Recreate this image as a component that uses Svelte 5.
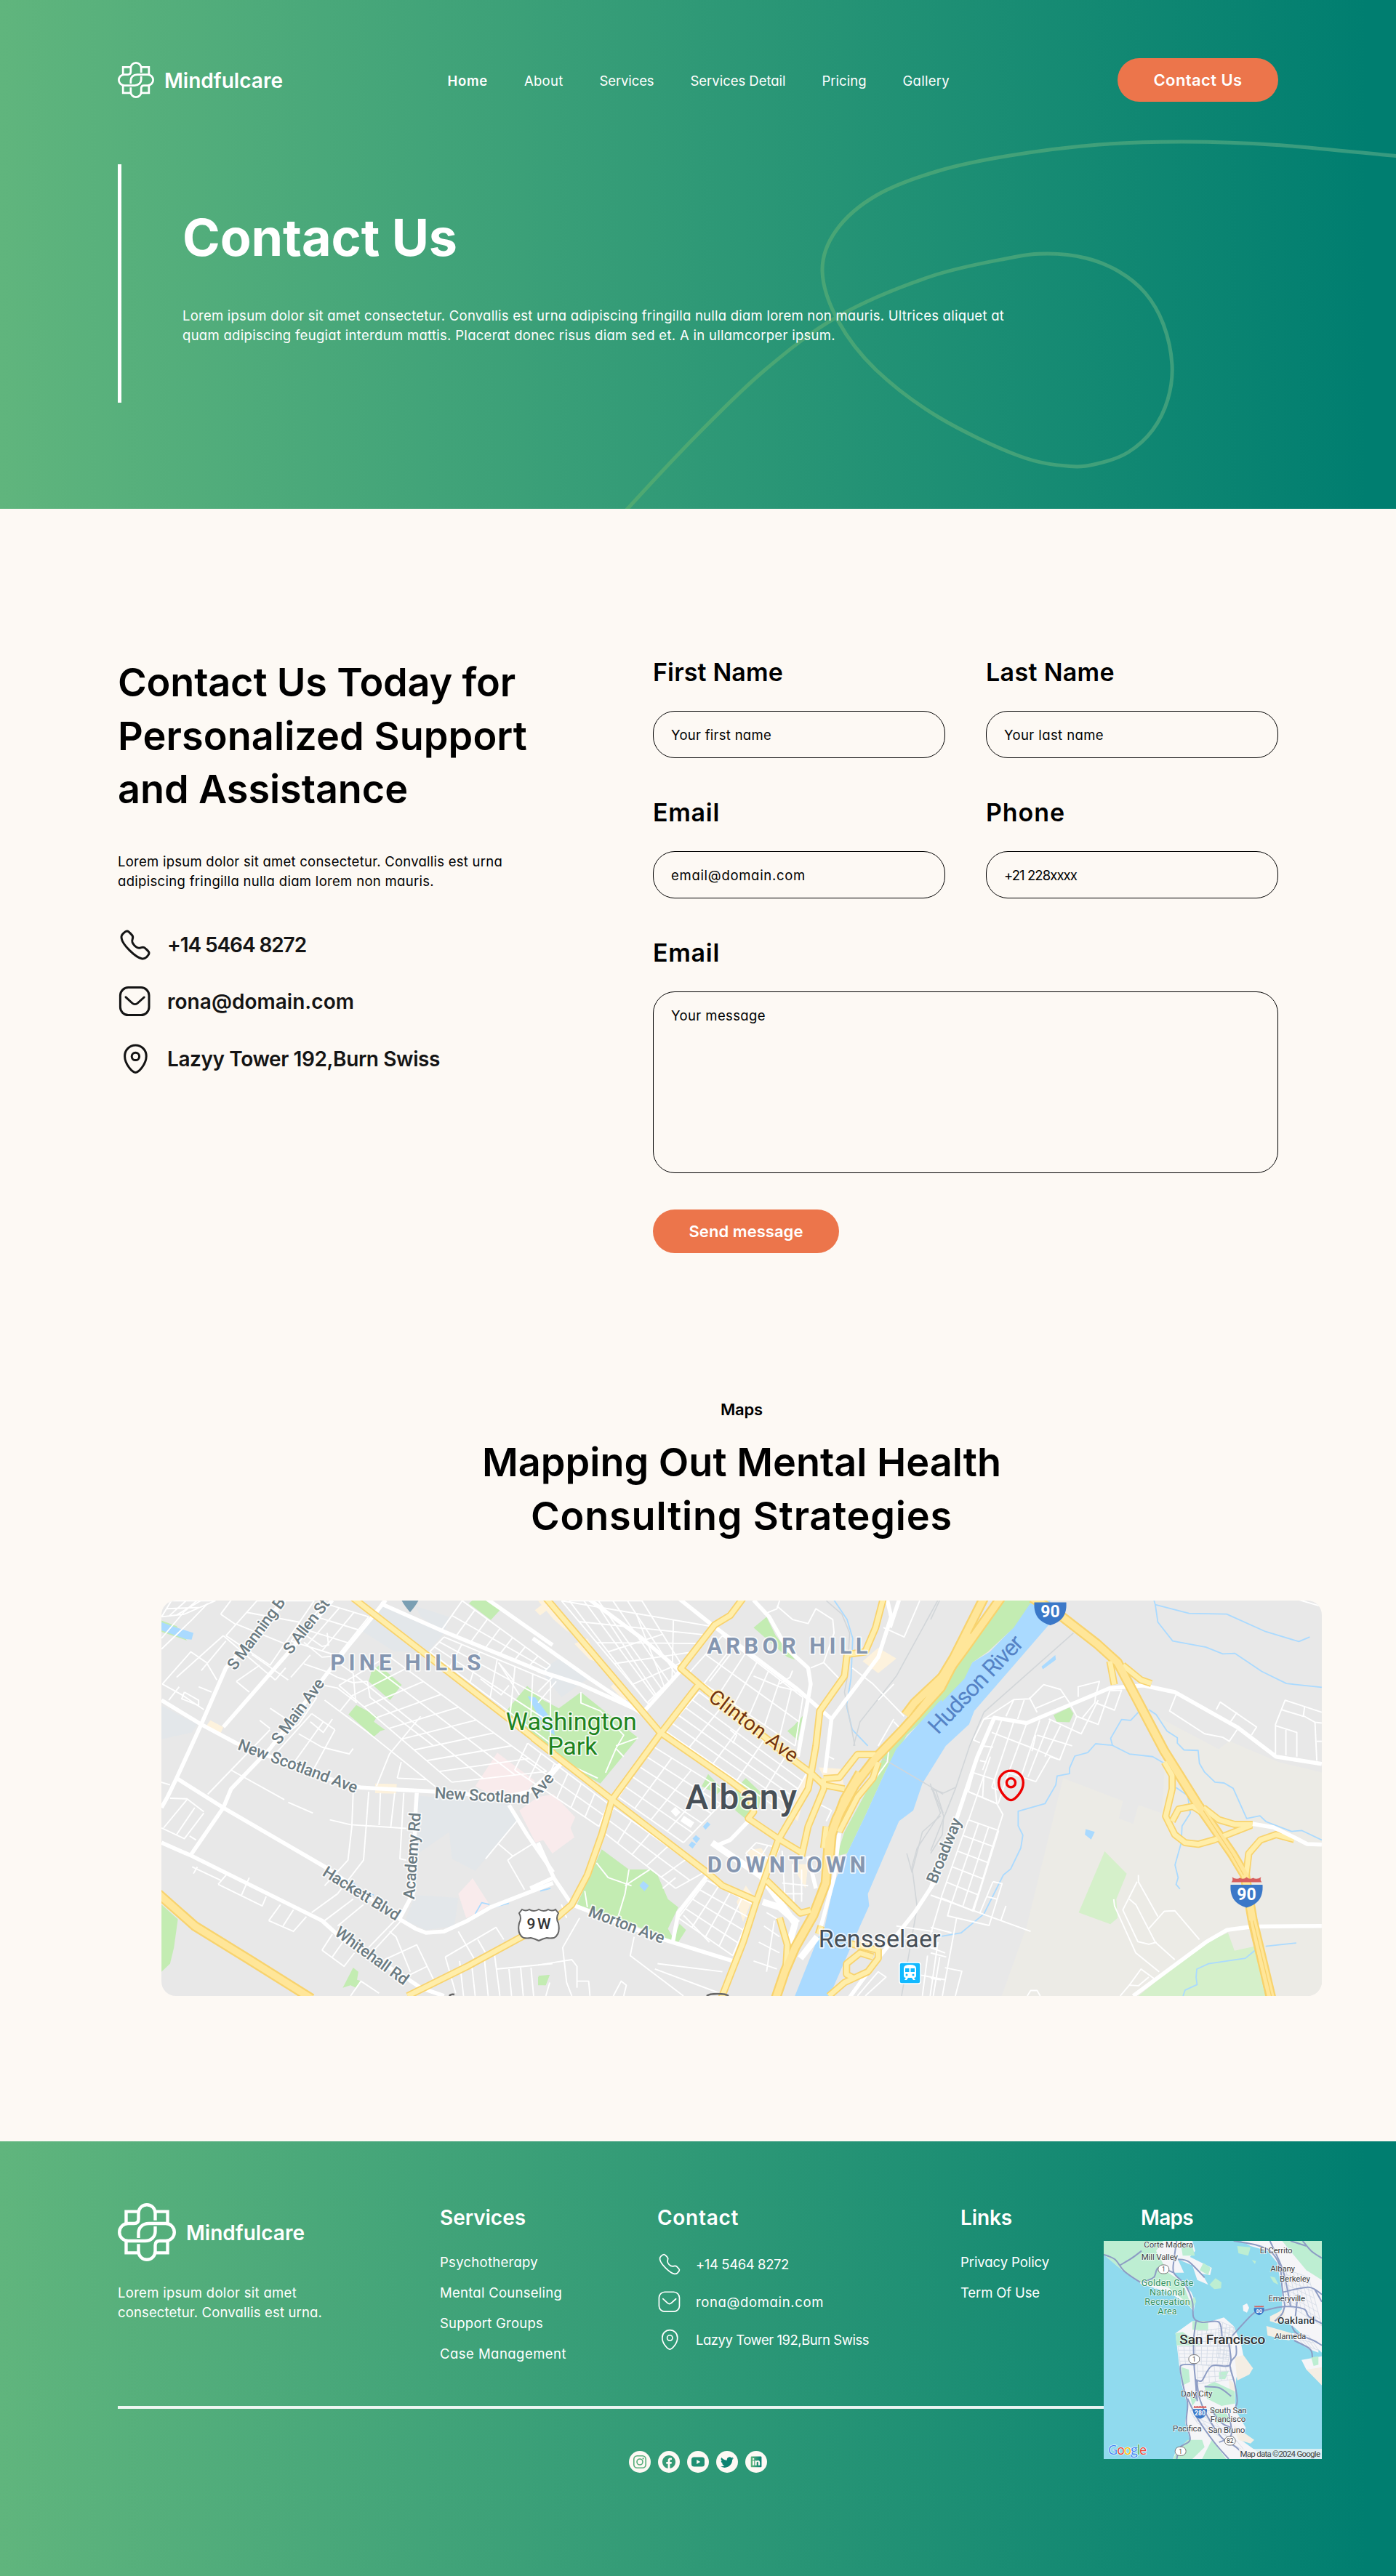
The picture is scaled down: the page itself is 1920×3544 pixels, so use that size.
<script>
  // Adjusts tracking so a run of text takes the given advance width.
  function fit(node, width) {
    const natural = node.getBoundingClientRect().width;
    node.style.letterSpacing = `${(width - natural) / node.textContent.length}px`;
  }

  // "x,y x,y ..." -> smooth Catmull-Rom path
  function smooth(str) {
    const p = str.trim().split(/\s+/).map((s) => s.split(',').map(Number));
    let d = `M${p[0]}`;
    for (let i = 0; i < p.length - 1; i++) {
      const a = p[i - 1] ?? p[i], b = p[i], c = p[i + 1], e = p[i + 2] ?? c;
      d += `C${b[0] + (c[0] - a[0]) / 6},${b[1] + (c[1] - a[1]) / 6} ${c[0] - (e[0] - b[0]) / 6},${c[1] - (e[1] - b[1]) / 6} ${c}`;
    }
    return d;
  }

  // Street grid filling a quad: n lines along the first side, m across it
  function grid([a, b, c, d, n, m]) {
    const mix = (p, q, t) => [p[0] + (q[0] - p[0]) * t, p[1] + (q[1] - p[1]) * t].map((v) => +v.toFixed(1));
    let out = '';
    for (let i = 0; i <= n; i++) out += `M${mix(a, d, i / n)}L${mix(b, c, i / n)}`;
    for (let j = 0; j <= m; j++) out += `M${mix(a, b, j / m)}L${mix(d, c, j / m)}`;
    return out;
  }

  const swoosh = smooth('855,712 863,700 960,597 1052,509 1153,435 1278,381 1388,355 1441,349 1493,355 1538,373 1575,403 1600,446 1612,502 1606,550 1585,592 1552,622 1513,637 1471,641.5 1401,627 1291,574 1205,509 1153,442 1131,373 1150,317 1205,269 1291,235 1389,214 1511,199 1628,195 1756,199.5 1925,215');

  const nav = [['Home', 55.5], ['About', 53.5], ['Services', 75], ['Services Detail', 131], ['Pricing', 61], ['Gallery', 64.5]];
  const reach = [['phone', '+14 5464 8272', 191, 128], ['mail', 'rona@domain.com', 257, 176], ['pin', 'Lazyy Tower 192,Burn Swiss', 375, 238]];
  const fields = [['First Name', 179, 'Your first name', 138], ['Last Name', 177, 'Your last name', 137], ['Email', 92, 'email@domain.com', 185], ['Phone', 109, '+21 228xxxx', 100]];
  const services = [['Psychotherapy', 135], ['Mental Counseling', 168], ['Support Groups', 142], ['Case Management', 174]];
  const links = [['Privacy Policy', 122], ['Term Of Use', 109]];

  // City map, drawn on three sheets that share one scale
  const sheets = [
    {
      x: -22,
      tint: ['62,450 200,520 180,550 62,575', '900,90 910,75 1020,110 1150,180 1090,250 960,250 830,170', '1050,785 1400,815 1430,880 1270,1065 1180,1020 1170,920 1050,1000', '1040,1155 1205,1165 1190,1270 1080,1285 1000,1250', '1040,80 1170,120 1150,180 1060,120'],
      pink: ['1270,750 1355,625 1500,730 1470,770 1350,790', '1205,1150 1260,1092 1325,1190 1270,1225 1235,1240'],
      park: ['62,1190 125,1245 110,1350 95,1410 62,1440', '860,360 870,325 900,300 987,373 942,430', '782,483 812,448 892,490 880,510 922,540 905,545 880,566 855,545', '1246,70 1260,58 1320,58 1365,95 1330,132', '760,1500 800,1425 820,1440 815,1470 830,1475 810,1500 790,1490', '1514,1455 1556,1452 1540,1490 1514,1488', '62,134 120,155 160,208 62,176'],
      meadow: [],
      shops: ['235,525 250,505 300,530 285,565', '885,740 968,742 965,778 885,776', '1500,95 1540,65 1560,85 1520,115'],
      water: ['62,140 120,160 185,180 178,205 155,203 62,170'],
      stream: ['1270,1225 1295,1183 1325,1190', '1340,1200 1400,1185', '1520,1140 1560,1130', '740,1085 800,1110 830,1140 880,1155'],
      rail: [],
      minor: ['65,370 140,410 225,465', '150,400 205,430 205,450 140,425 150,400', '205,380 255,400', '90,430 130,380', '62,200 150,100 200,58', '62,240 180,130 240,70', '65,370 175,250 235,290 275,355', '120,345 300,190', '215,320 310,210', '300,190 330,215 500,355', '290,110 330,58', '290,110 350,150', '350,360 440,300', '350,360 400,400', '410,260 550,355', '500,355 540,310', '610,295 700,325 740,345 800,365 855,360', '610,215 680,270 740,265', '700,180 705,225 680,230 620,190', '560,345 635,262', '740,290 800,330 810,440', '690,375 740,385 815,440', '855,360 865,420 1110,600', '690,430 850,545 1115,750', '660,420 590,520 480,600', '590,555 680,605 785,630 800,610', '635,510 685,550 720,500', '800,410 750,470', '480,460 550,505', '440,505 480,535', '60,735 95,745', '95,795 160,797 225,845', '70,905 160,800', '120,930 190,830', '62,905 150,945 225,850', '170,935 195,950', '330,690 535,800', '550,810 645,850', '240,780 480,540', '800,775 795,900 780,1025 690,1120', '860,770 850,900 840,1025 740,1150', '905,775 900,895', '960,775 945,900', '995,775 980,1020 1005,1025', '710,875 790,893 1005,907', '890,750 940,630 1060,490', '970,720 985,660', '970,720 1080,725', '180,1050 290,1100', '185,1075 200,1050', '280,1115 450,1195 465,1160', '280,1115 320,1070', '370,1155 400,1090', '475,1250 570,1290 620,1235', '475,1250 520,1190', '530,1270 570,1210', '680,1360 765,1420 805,1370', '680,1360 720,1300', '720,1385 760,1330', '640,1220 740,1150', '690,1250 800,1170', '740,1270 840,1190', '860,1350 960,1250', '880,1360 985,1250', '920,1395 1045,1340 1110,1470', '1000,1460 1085,1420', '940,1290 965,1310 1020,1440', '1155,1385 1350,1275 1380,1320', '1155,1385 1195,1520', '1205,1290 1265,1390', '1280,1320 1310,1370', '1350,1430 1568,1410', '1210,1400 1225,1530', '1255,1400 1270,1530', '1305,1390 1320,1530', '1345,1380 1365,1530', '1400,1430 1410,1530', '1445,1425 1455,1530', '1485,1425 1495,1530', '1360,965 1415,1010 1490,965', '1310,1020 1430,880', '1395,1025 1460,1135', '1395,1025 1415,1010', '790,1530 830,1475 900,1520', '1360,290 1420,360', '1440,410 1360,290', '1290,350 1370,410 1400,375'],
      grids: [[[935, 265], [1545, 695], [1180, 735], [745, 375], 3, 9], [[1150, 195], [1560, 360], [1560, 590], [1095, 250], 3, 6], [[360, 600], [830, 765], [650, 1025], [250, 780], 0, 8], [[350, 870], [770, 1100], [620, 1235], [200, 1010], 0, 7], [[430, 60], [650, 60], [480, 300], [310, 190], 3, 2], [[690, 70], [860, 120], [740, 265], [560, 210], 3, 3], [[1220, 60], [1560, 300], [1530, 330], [1140, 170], 2, 7], [[640, 480], [730, 540], [640, 700], [500, 630], 1, 2], [[100, 60], [270, 60], [150, 110], [62, 120], 2, 3]],
      major: ['62,430 215,520 350,590 480,640 700,720 830,755 1110,770 1380,790 1480,770 1602,665', '62,960 180,1010 680,1250 760,1320 1000,1460 1060,1500 1150,1530', '120,720 300,830 700,1055 980,1245 1040,1280 1080,1295 1150,1290 1240,1250 1330,1200 1570,1110', '62,830 85,790 120,720 215,520 310,310 430,180 530,58', '300,530 540,265 720,58', '175,1005 300,830 330,760 480,610 700,330 780,230 870,125 925,58', '905,70 1150,175 1568,340', '1310,50 1568,225', '1400,820 1470,930 1570,1070', '1045,775 1040,850 1030,1150 980,1240'],
      wide: [],
      yellow: ['800,50 880,110 1572,628', '1010,1530 1240,1420 1440,1315 1500,1285'],
      highway: ['50,1150 190,1270 400,1395 640,1540'],
    },
    {
      x: 518,
      tint: ['10,320 90,270 190,350 90,420'],
      pink: ['-72,840 0,790 60,780 143,865 125,905 140,940 55,1000 20,950 -10,960'],
      park: ['-122,470 -42,377 20,430 80,460 165,400 385,570 240,740 90,660 -10,575', '245,985 350,1060 430,1060 460,1080 500,1170 540,1200 500,1280 530,1330 300,1240 150,1190 220,1040', '545,1262 570,1285 540,1330 520,1322', '830,160 880,120 915,190 990,280 960,270', '630,750 655,705 710,760 690,780', '760,760 800,720 860,775 850,830 800,872 760,840', '985,525 1020,488 1000,580 960,545', '1570,330 1350,600 1270,760 1180,920 1150,1010 1190,1000 1260,860 1340,690 1420,560 1568,430', '0,1460 45,1452 30,1490 0,1490'],
      meadow: [],
      shops: ['1250,285 1310,235 1380,275 1310,330', '1080,680 1165,685 1180,755 1120,750', '970,860 1020,720 1050,700 1000,880', '800,990 860,980 900,1040 860,1070', '765,1180 800,1120 830,1160 790,1255', '0,60 40,60 120,180 60,130', '190,200 240,290 200,280 140,220', '290,370 350,430 330,430 280,380', '1000,1040 1040,1040 1030,1130 1000,1080', '1200,1320 1260,1325 1310,1360 1240,1370'],
      water: ['1902,50 1830,160 1740,250 1672,290 1630,360 1540,440 1380,610 1340,690 1260,860 1190,1000 1140,1110 1100,1290 1080,1310 985,1540 1118,1540 1240,1270 1275,1195 1270,1150 1390,880 1445,840 1480,740 1570,600 1660,520 1680,470 1985,130 1970,50', '-40,415 -10,420 50,500 65,560 30,540', '635,900 652,882 664,892 645,912', '595,945 608,932 624,945 610,962', '580,970 592,955 608,965 595,982', '390,1120 405,1102 427,1120 410,1141'],
      stream: ['1140,58 1190,130 1212,200 1205,350 1188,450 1210,540 1270,600'],
      rail: ['1110,60 1170,110 1200,180 1190,350 1180,400 1200,500 1220,600', '1280,620 1500,745 1560,780', '1540,58 1380,340 1240,510 1215,600', '1510,740 1550,850 1460,980 1440,1050 1460,1200 1400,1530', '1530,760 1560,850', '1420,1000 1440,1070 1480,920 1550,860'],
      minor: ['920,80 980,130 1040,145 1070,90 1135,130 1140,180 1100,290 1160,350', '1100,290 1050,310', '870,110 920,90 930,60', '660,360 740,260', '830,340 930,380 1020,400', '980,320 970,345 930,370', '1330,160 1410,195 1470,60', '1210,310 1290,370 1410,490', '1370,370 1310,430', '1220,380 1170,440', '1370,510 1400,540', '1310,600 1370,500', '0,440 70,360', '0,400 60,340', '165,400 165,440 240,470 330,560 300,610 330,640', '385,570 300,600', '120,670 230,720', '300,610 260,700', '225,1035 270,1090 360,1120', '350,1060 335,1150 310,1230', '180,1140 190,1200', '430,1060 335,1120', '90,1190 110,1240', '160,1240 95,1350 110,1480 130,1530', '0,1415 130,1395 150,1420 150,1500', '370,1310 355,1380 560,1530', '460,1410 710,1440', '450,1430 700,1520', '290,1530 320,1475 340,1490 330,1530', '150,1475 195,1475 200,1530', '30,1530 45,1480', '530,1090 480,1130', '560,1230 660,1330', '940,990 950,1150', '980,1040 985,1180', '1015,1060 1015,1180', '940,1110 1040,1120', '940,1150 1020,1150', '1110,880 1130,840 1090,820', '750,590 765,560 740,540', '880,1220 950,1260', '870,1270 930,1310', '850,1330 930,1370', '830,1400 920,1430', '910,1250 880,1440', '1380,1270 1520,1290', '1400,1310 1568,1370', '1230,1530 1310,1440 1340,1460 1260,1530', '1500,1380 1480,1530', '1540,1330 1510,1530', '1460,1450 1568,1470', '1120,640 1140,650', '1350,620 1345,660 1300,720'],
      grids: [[[90, 60], [665, 155], [545, 315], [430, 450], 5, 4], [[120, 60], [400, 60], [560, 310], [420, 440], 2, 5], [[710, 190], [1020, 420], [990, 600], [580, 330], 2, 7], [[620, 400], [1035, 700], [950, 850], [490, 545], 5, 5], [[440, 600], [740, 780], [560, 960], [310, 790], 5, 4], [[-40, 590], [270, 815], [235, 900], [-90, 690], 2, 6], [[290, 830], [640, 1070], [530, 1130], [250, 920], 2, 5], [[650, 1100], [830, 1190], [750, 1380], [540, 1240], 4, 4], [[840, 960], [930, 980], [880, 1080], [800, 1000], 2, 2], [[390, 1250], [740, 1400], [720, 1450], [370, 1330], 0, 4]],
      major: ['190,50 400,200 545,320', '540,50 670,150 1000,390 1130,500', '545,325 400,480', '830,58 890,120 960,240 1040,310 1050,370 1030,480 1000,640', '1345,58 1360,120 1310,270 1130,500 1105,700', '1390,58 1355,160', '0,320 160,370 390,470', '-20,200 200,350 400,480', '0,960 60,1090 130,1190', '-30,1130 60,1090', '130,1190 450,1310 750,1400', '650,1085 540,1220 520,1325', '90,665 40,720', '810,880 740,950 690,970', '1160,925 1140,1090 1090,1270', '1545,1080 1450,1220 1310,1390 1200,1535', '1040,1010 1070,1130'],
      wide: ['670,960 860,1085 990,1260 960,1360', '865,1180 930,1200 1000,1260', '1010,1390 1075,1310', '520,835 540,855', '555,870 595,895'],
      yellow: ['30,50 470,550 740,730 815,785 830,845 810,870 925,945 1020,1000', '-20,570 285,800 650,1070 710,1120 840,1175', '790,50 740,115 680,150 550,312 650,395 980,650 1050,700 1100,745 1180,760', '620,370 475,550 285,800 245,930 190,1080 130,1190 70,1240', '1330,50 1300,160 1260,250 1190,260 1180,340 1085,470 1070,600 1050,710 1040,760 925,950 870,1100 840,1180 790,1330 705,1540', '1100,720 1100,760 1040,900 1015,1010', '1100,722 1160,718 1230,632 1300,632', '880,1100 1010,1222 1050,1212', '1310,660 1290,720 1230,790 1160,920', '930,1240 960,1340 955,1420', '1090,1270 1080,1300', '1120,1530 1180,1480 1270,1440 1310,1390 1310,1360 1200,1335', '1290,1385 1240,1370 1188,1410 1188,1450 1220,1465', '1110,900 1100,980'],
      highway: ['1660,180 1550,385 1400,545 1300,645 1220,745 1150,870 1120,950 1108,1110 1060,1230 990,1350 950,1440 915,1540', '1560,340 1450,440 1415,485', '1240,700 1180,800 1130,930 1120,1050'],
    },
    {
      x: 1058,
      tint: [],
      pink: [],
      park: ['270,58 392,58 320,160 220,250 160,290 130,350 45,435 30,400 130,250', '473,485 535,457 550,480 535,512 485,510'],
      meadow: ['670,992 755,1075 715,1170 720,1240 692,1263 570,1220', '1145,1295 1170,1362 1250,1345 1292,1530 800,1530 1040,1340'],
      shops: [],
      water: ['427,305 480,262 482,280 432,315', '597,910 632,920 618,948 594,930'],
      stream: ['860,58 865,75 995,107 1140,110 1290,175 1418,212 1460,195', '865,75 875,140 932,210 1060,233 1125,258 1172,256 1275,323 1370,368 1506,382', '800,475 770,505 735,502 693,572 700,598 635,592 605,625 555,638 535,682 535,703 487,712 482,745 440,815 337,843 337,897 355,932 347,980 308,1058 280,1080 205,1225 118,1295 30,1310', '700,598 765,630 855,640 900,665', '840,465 868,483 910,545 950,570 950,590 975,615 1030,617 1035,665 1055,698 1095,735 1130,738 1165,758 1217,870 1268,860 1292,882 1390,918 1430,915 1506,950', '945,755 990,785 1000,850 968,898 965,960 941,1043 953,1090 945,1115 960,1132', '1408,1333 1290,1345', '1250,1360 1212,1390 1070,1410 1025,1430 1022,1460 1026,1488 980,1508 972,1530'],
      rail: ['550,180 205,475 150,600 95,760 0,990', '0,760 50,775 95,755', '10,765 50,860 45,930 0,1000', '35,58 0,130'],
      minor: ['245,495 205,500 165,578 190,588', '205,500 320,428 380,425 435,372 500,390 535,440 562,490 540,545 497,652 460,640 405,733 300,700', '380,420 410,475', '405,460 515,415', '320,428 290,490', '360,430 335,500', '568,418 568,380 650,360 635,415', '690,395 735,393 708,467 635,440', '635,415 632,440 585,495', '562,490 645,520 690,395', '455,500 580,555 645,430', '235,550 410,615 490,650', '275,500 200,690', '320,510 235,755', '370,515 300,700', '420,505 350,710', '460,505 375,715', '500,525 440,640', '410,560 545,600', '200,600 240,605', '190,655 215,660', '235,755 260,765', '405,560 390,620', '945,410 920,470 1055,555 1125,568 1150,583 1180,540', '1100,465 1115,437 1255,530 1235,560', '1180,475 1155,510', '1506,475 1365,430 1328,520 1328,630', '1350,465 1435,490 1440,455', '1435,488 1480,512 1506,515', '1328,525 1410,550 1410,640', '1368,540 1368,635', '1480,512 1487,655', '1487,583 1506,583', '145,770 255,815 278,855 240,970 190,1130 160,1215', '0,1155 385,1290', '290,1195 270,1250', '240,1105 275,1112 225,1268 65,1232 80,1180', '240,1105 190,1220', '215,1160 255,1170', '0,1275 80,1295', '100,1240 45,1530', '40,1170 0,1300', '0,1370 60,1385', '55,1425 120,1438 95,1530', '35,1385 10,1530', '0,1465 40,1470', '300,700 260,815', '230,640 145,880', '800,1080 800,1105 875,1235', '795,1105 740,1210 798,1328 840,1338 870,1330', '765,1170 790,1190 865,1330 940,1395', '840,1280 900,1215 940,1213 1035,1320', '705,1170 708,1195 790,1370 880,1440', '730,1530 765,1490 800,1492 840,1460', '765,1490 810,1430 860,1465', '372,1530 385,1510 410,1510 422,1530', '1415,56 1500,80'],
      grids: [[[145, 875], [262, 915], [165, 1215], [40, 1165], 5, 3], [[165, 700], [245, 725], [255, 815], [145, 770], 1, 2]],
      major: ['100,870 180,640 245,495 370,515 690,385 820,375 940,400 1180,530 1330,640 1506,667', '100,870 40,1020 0,1130', '780,1530 1060,1330 1140,1285 1240,1272 1506,1270'],
      wide: [],
      yellow: ['690,285 707,372', '740,300 810,355 850,368', '900,660 930,710 930,760 905,862 940,930 980,960 1030,966 1090,950 1235,895', '930,880 955,835 1010,825 1050,850', '1050,830 1110,875 1170,892 1240,892', '1400,948 1330,930 1270,950 1225,1000 1215,1080'],
      highway: ['270,50 130,240 0,410', '205,50 90,270 -10,430 -60,490', '390,50 480,100 640,220 720,290 900,620 1030,820 1160,1000 1210,1080 1240,1250 1312,1540'],
    },
  ];
  const ramp = ['1240,890 1320,903 1400,940 1450,965 1506,967'];
  const seams = ['1050,840 1160,1003 1205,1080', '1228,1250 1290,1530', '1242,1250 1312,1530'];

  const S = 2.8, T = 2.7034;
  const place = (sheet, x, y) => [sheets[sheet].x + x / S, -22 + y / T];
  const labels = [
    [0, 'S Manning B', 345, 322, 542, 66, 22, 'st'], [0, 'S Allen St', 560, 262, 712, 72, 22, 'st'], [0, 'S Main Ave', 515, 598, 692, 368, 22, 'st'],
    [0, 'New Scotland Ave', 352, 612, 808, 776, 22, 'st'], [0, 'New Scotland', 1113, 795, 1478, 815, 22, 'st'], [0, 'Ave', 1508, 798, 1576, 722, 22, 'st'],
    [0, 'Academy Rd', 1035, 1172, 1060, 850, 22, 'st'], [0, 'Hackett Blvd', 678, 1080, 965, 1252, 22, 'st'], [0, 'Whitehall Rd', 725, 1302, 995, 1492, 22, 'st'],
    [0, 'PINE HILLS', 712, 318, 1292, 318, 31, 'hood'], [1, 'Washington', -124, 541, 380, 541, 34, 'green'], [1, 'Park', 37, 633, 228, 633, 34, 'green'],
    [1, 'Clinton Ave', 652, 428, 978, 665, 28, 'brown'], [1, 'ARBOR HILL', 650, 258, 1270, 258, 31, 'hood'], [1, 'DOWNTOWN', 652, 1070, 1262, 1070, 31, 'hood'],
    [1, 'Albany', 567, 836, 997, 836, 48, 'city'], [1, 'Morton Ave', 190, 1232, 478, 1336, 22, 'st'], [1, 'Rensselaer', 1080, 1348, 1550, 1348, 34, 'town'],
    [2, 'Broadway', 22, 1115, 120, 878, 22, 'st'], [2, 'Hudson River', 28, 560, 362, 222, 32, 'river'],
  ].map(([s, text, x1, y1, x2, y2, size, kind]) => {
    const [ax, ay] = place(s, x1, y1), [bx, by] = place(s, x2, y2);
    return { text, x: ax, y: ay, size, kind, len: Math.hypot(bx - ax, by - ay), rot: (Math.atan2(by - ay, bx - ax) * 180) / Math.PI };
  });

  // Bay map
  const bay = {
    land: ['114,309 480,309 492,350 470,375 560,420 553,450 520,445 545,490 500,470 480,410 420,385 445,440 400,440 475,520 492,560 485,600 460,570 380,520 270,488 225,450 190,430 114,365', '410,690 480,640 560,640 610,625 650,660 680,730 690,780 660,880 655,970 660,1010 700,1080 680,1130 790,1209 400,1209 410,1180 470,1130 450,1060 460,990 435,900 425,820', '680,309 1014,309 1014,770 960,720 900,665 860,640 800,640 850,590 850,520 830,400 790,350 720,330', '890,690 920,690 1000,740 1000,770 960,755 900,720', '930,800 1014,785 1014,840 950,840', '688,575 705,567 714,585 705,605 690,598'],
    green: ['114,309 360,309 330,350 380,440 440,480 480,590 440,550 380,500 270,480 225,450 190,430 114,365', '430,309 480,330 490,370 440,370', '550,490 575,463 600,480 598,505 570,508', '480,640 545,640 545,680 480,675', '410,690 440,685 520,740 415,740', '530,910 570,890 655,930 655,980 600,990 540,960', '435,830 465,840 470,890 440,905', '400,1209 420,1170 460,1130 520,1130 530,1160 480,1209', '560,1130 620,1209 520,1209', '850,309 1014,309 1014,470 950,430 900,370', '970,790 1000,785 1000,820 980,825', '665,330 720,335 710,370 670,360', '525,400 555,420 545,450 510,430', '465,560 490,540 495,560 480,590', '590,850 630,845 615,880 590,880', '725,388 742,392 738,404', '800,455 820,460 835,490 815,480', '470,950 500,960 480,990', '560,1000 620,1020 640,1060 580,1060'],
    sand: ['655,790 690,780 730,835 715,860 665,885', '785,660 890,690 880,720 790,700', '800,620 860,590 860,630 830,650 800,640', '630,880 655,900 655,980 635,930', '650,1070 735,1130 720,1145 670,1130', '950,840 1014,830 1014,905'],
    streets: [[[420, 745], [640, 745], [625, 820], [430, 820], 5, 9], [[500, 680], [655, 665], [640, 740], [500, 740], 4, 8], [[590, 640], [650, 665], [630, 800], [580, 790], 8, 4], [[850, 420], [960, 460], [1014, 660], [870, 570], 7, 7], [[500, 820], [640, 830], [650, 880], [500, 900], 3, 6], [[900, 690], [960, 700], [1000, 760], [940, 740], 2, 4], [[470, 1010], [560, 1010], [700, 1180], [500, 1060], 4, 4]],
    roads: ['114,365 160,385 200,435 265,480', '415,309 405,380 403,440 450,490 480,560 485,625 520,645 590,645 603,720', '270,480 320,460 340,420 403,440', '420,385 465,395 530,460', '495,640 485,720 487,820 492,880 500,970', '645,700 730,610 770,598 860,580 940,590 960,620 1014,650', '650,309 740,325 800,350 840,410 850,500 862,580', '800,309 850,420 870,500 885,580', '885,309 950,330', '935,309 970,350 1014,380', '855,520 960,500 1014,530', '1014,560 985,510', '860,580 850,610 820,640', '915,530 905,620', '630,730 635,820 560,825 520,885 500,890 495,960', '660,740 660,780 635,820 655,900 665,970 655,1000', '492,820 440,820 430,840 445,920 460,980 455,1060 470,1130 430,1160 415,1209', '497,880 510,960 540,1030 600,1120 660,1160 710,1209', '460,960 500,1040 570,1140 630,1209', '890,660 910,690 980,720 1014,740', '900,720 965,755 975,790', '630,1020 640,1110 590,1140', '640,1080 600,1060 560,1010', '180,410 230,380 270,350', '530,910 590,915 640,950'],
  };
  const bayLabels = [
    ['Corte Madera', 280, 483, 337, 11.5], ['Mill Valley', 269, 420, 386, 11.5], ['El Cerrito', 758, 893, 360, 11.5], ['Albany', 802, 903, 436, 11.5],
    ['Berkeley', 840, 966, 476, 11.5], ['Emeryville', 793, 945, 558, 11.5], ['Oakland', 831, 984, 650, 13.5, 'm'], ['Alameda', 818, 949, 714, 11.5],
    ['San Francisco', 427, 781, 734, 19, 'm'], ['Daly City', 433, 562, 951, 11.5], ['South San', 552, 704, 1021, 11.5], ['Francisco', 554, 700, 1055, 11.5],
    ['Pacifica', 399, 518, 1095, 11.5], ['San Bruno', 545, 697, 1100, 11.5],
    ['Golden Gate', 269, 484, 494, 12.5, 'g'], ['National', 303, 449, 533, 12.5, 'g'], ['Recreation', 283, 470, 573, 12.5, 'g'], ['Area', 337, 416, 612, 12.5, 'g'],
  ];
  const bx = (x) => (x - 114) / 3;
  const by = (y) => (y - 309) / 3;
  const google = [['G', 0, '#4285f4'], ['o', 12.2, '#ea4335'], ['o', 21.6, '#fbbc05'], ['g', 31, '#4285f4'], ['l', 39.8, '#34a853'], ['e', 43, '#ea4335']];
</script>

{#snippet logo()}
  <svg class="mark" viewBox="0 0 80 80" fill="none" stroke="#fff" stroke-width="4.4">
    {#each [0, 180] as turn}
      <g transform="rotate({turn} 40 40)">
        <path d="M51.5 23.8V13.7a11.5 11.5 0 0 0-23 0V22q0 6-6 6H14.200a12 12 0 0 0 0 24H37.500C46 52 51.500 46 51.500 39V32" />
        <path d="M28.500 11.600H11.500V28M51.500 11.600H68.500V28" />
      </g>
    {/each}
  </svg>
{/snippet}

{#snippet glyph(name)}
  <svg class="glyph" viewBox="0 0 24 24" fill="none" stroke="currentColor" stroke-width="1.5" stroke-linecap="round" stroke-linejoin="round">
    {#if name === 'phone'}
      <path d="M11.532 12.472c3.989 3.988 4.894-.625 7.434 1.913 2.448 2.448 3.855 2.938.753 6.040-.388.312-2.857 4.070-11.534-4.605C-.493 7.144 3.262 4.672 3.574 4.284 6.684 1.174 7.166 2.589 9.614 5.037c2.540 2.540-2.071 3.447 1.918 7.435Z" />
    {:else if name === 'mail'}
      <rect x="1.700" y="2.300" width="19.800" height="19" rx="5.500" />
      <path d="m5.500 8.900 4.400 4.100c1.100 1 2.700 1 3.800 0l4.400-4" />
    {:else}
      <path d="M12.200 2.500c-4.200 0-7.400 3.300-7.400 7.500 0 5.500 5.200 11.200 7.400 11.200s7.400-5.700 7.400-11.200c0-4.200-3.200-7.500-7.400-7.500z" />
      <circle cx="12.200" cy="10.200" r="2.600" />
    {/if}
  </svg>
{/snippet}

{#snippet interstate(x, y, w, num)}
  <g transform="translate({x} {y}) scale({w / 44})">
    <path d="M1 7Q4 4 2 0q6 4 11 1 5 3 9-1 4 4 9 1 5 3 11-1-2 4 1 7z" fill="#d75f5f" />
    <path d="M0 10.500H44C45 28 38 37 22 42 6 37-1 28 0 10.500z" fill="#3b78c8" />
    <text x="22" y="31" class="num" font-size={num.length > 2 ? 20 : 23}>{num}</text>
  </g>
{/snippet}

<div class="page">
  <section class="hero">
    <svg class="swoosh" viewBox="0 0 1920 700" fill="none">
      <defs>
        <linearGradient id="line" x1="860" x2="1920" y1="0" y2="0" gradientUnits="userSpaceOnUse">
          <stop offset="0" stop-color="#4fa971" /><stop offset="1" stop-color="#379a80" />
        </linearGradient>
      </defs>
      <path d={swoosh} stroke="url(#line)" stroke-width="5" />
    </svg>
    <header>
      <div class="brand">{@render logo()}<strong><span use:fit={163}>Mindfulcare</span></strong></div>
      <nav>{#each nav as [name, w], i}<a href="#top" class:active={i === 0}><span use:fit={w}>{name}</span></a>{/each}</nav>
      <a class="button" href="#contact"><span use:fit={122}>Contact Us</span></a>
    </header>
    <div class="intro">
      <h1><span use:fit={378}>Contact Us</span></h1>
      <p>
        <span use:fit={1130}>Lorem ipsum dolor sit amet consectetur. Convallis est urna adipiscing fringilla nulla diam lorem non mauris. Ultrices aliquet at</span><br />
        <span use:fit={898}>quam adipiscing feugiat interdum mattis. Placerat donec risus diam sed et. A in ullamcorper ipsum.</span>
      </p>
    </div>
  </section>

  <section class="contact" id="contact">
    <div class="about">
      <h2><span use:fit={547}>Contact Us Today for</span><br /><span use:fit={563}>Personalized Support</span><br /><span use:fit={399}>and Assistance</span></h2>
      <p><span use:fit={529}>Lorem ipsum dolor sit amet consectetur. Convallis est urna</span><br /><span use:fit={435}>adipiscing fringilla nulla diam lorem non mauris.</span></p>
      <ul>{#each reach as [icon, text, w]}<li>{@render glyph(icon)}<span use:fit={w}>{text}</span></li>{/each}</ul>
    </div>
    <form>
      {#each fields as [name, w, hint, hw]}
        <div class="field">
          <h3><span use:fit={w}>{name}</span></h3>
          <div class="input"><span use:fit={hw}>{hint}</span></div>
        </div>
      {/each}
      <div class="field full">
        <h3><span use:fit={92}>Email</span></h3>
        <div class="input area"><span use:fit={130}>Your message</span></div>
      </div>
      <a class="button send" href="#contact"><span use:fit={157}>Send message</span></a>
    </form>
  </section>

  <section class="maps">
    <h4><span use:fit={58}>Maps</span></h4>
    <h2><span use:fit={714}>Mapping Out Mental Health</span><br /><span use:fit={580}>Consulting Strategies</span></h2>
    <svg class="map" viewBox="0 0 1596 544">
      <rect width="1596" height="544" fill="#e8e8e8" />
      <polygon transform="translate(1058 -22) scale({1 / S} {1 / T})" points="510,720 740,805 725,870 780,890 800,820 890,850 900,700 850,480 1110,612 1150,582 1340,660 1510,700 1510,1540 270,1540 370,1270" fill="#ecebe6" />
      {#each ['areas', 'minor', 'major', 'casing', 'fill'] as layer}
        {#each sheets as s}
          <g transform="translate({s.x} -22) scale({1 / S} {1 / T})" class={layer}>
            {#if layer === 'areas'}
              {#each ['tint', 'pink', 'park', 'meadow', 'shops', 'water'] as kind}
                {#each s[kind] as pts}<polygon points={pts} class={kind} />{/each}
              {/each}
              {#each s.stream as pts}<polyline points={pts} class="stream" />{/each}
              {#each s.rail as pts}<polyline points={pts} class="rail" />{/each}
            {:else if layer === 'minor'}
              {#each s.grids as g}<path d={grid(g)} />{/each}
              {#each s.minor as pts}<polyline points={pts} />{/each}
            {:else if layer === 'major'}
              {#each s.major as pts}<polyline points={pts} />{/each}
              {#each s.wide as pts}<polyline points={pts} class="wide" />{/each}
            {:else}
              {#each s.yellow as pts}<polyline points={pts} class="arterial" />{/each}
              {#each s.highway as pts}<polyline points={pts} class="freeway" />{/each}
            {/if}
          </g>
        {/each}
      {/each}
      <g transform="translate(1058 -22) scale({1 / S} {1 / T})" class="major">
        {#each ramp as pts}<polyline points={pts} />{/each}
        {#each seams as pts}<polyline points={pts} class="seam" />{/each}
      </g>
      {#each labels as l}
        <text class={l.kind} font-size={l.size} textLength={l.len} transform="translate({l.x} {l.y}) rotate({l.rot})">{l.text}</text>
      {/each}
      <path d="M330-1h24q-4 8-12 17-8-9-12-17z" fill="#7a9fb3" />
      {@render interstate(1200.5, -8, 44, '90')}
      {@render interstate(1470.5, 380.5, 44, '90')}
      <path d="M496 425q5 3 10 0 6 4 13 0 7 4 13 0 5 3 10 0l4 5q-4 7 0 14 3 15-6 20-6 1-10 0-5 1-11 4-6-3-11-4-5 1-10 0-9-5-6-20 4-7 0-14z" fill="#fff" stroke="#666" stroke-width="2" />
      <text x="519" y="452" class="nine" font-size="21" textLength="33">9W</text>
      <path d="M750 544q3-3 15-3t15 3M396 544q2-3 7-2" fill="none" stroke="#666" stroke-width="2.5" />
      <g transform="translate(1015 498)">
        <rect width="29" height="29" rx="3" fill="#12b9ff" stroke="#fff" stroke-width="1.5" />
        <path d="M6 8q0-5 8.500-5T23 8v10q0 3-3 3l2 3h-3l-2-3h-5l-2 3H7l2-3q-3 0-3-3z" fill="#fff" />
        <path d="M8 8h5.500v5H8zM15.500 8H21v5h-5.500z" fill="#12b9ff" /><circle cx="10" cy="17" r="1.5" fill="#12b9ff" /><circle cx="19" cy="17" r="1.5" fill="#12b9ff" />
      </g>
      <g transform="translate(1141 228) scale(2.25)" fill="none" stroke="#ee0000" stroke-width="1.5">
        <path d="M12.200 2.700c-4.300 0-7.500 3.300-7.500 7.400 0 5.300 5.200 10.600 7.500 10.600s7.500-5.300 7.500-10.600c0-4.100-3.200-7.400-7.500-7.400z" />
        <circle cx="12.2" cy="10.1" r="2.7" />
      </g>
    </svg>
  </section>

  <footer>
    <div class="columns">
      <div class="identity">
        <div class="brand big">{@render logo()}<strong><span use:fit={163}>Mindfulcare</span></strong></div>
        <p><span use:fit={246}>Lorem ipsum dolor sit amet</span><br /><span use:fit={281}>consectetur. Convallis est urna.</span></p>
      </div>
      <div class="services">
        <h5><span use:fit={118}>Services</span></h5>
        <ul>{#each services as [t, w]}<li><span use:fit={w}>{t}</span></li>{/each}</ul>
      </div>
      <div class="reach">
        <h5><span use:fit={112}>Contact</span></h5>
        <ul>{#each reach as [icon, text, , w]}<li>{@render glyph(icon)}<span use:fit={w}>{text}</span></li>{/each}</ul>
      </div>
      <div class="links">
        <h5><span use:fit={71}>Links</span></h5>
        <ul>{#each links as [t, w]}<li><span use:fit={w}>{t}</span></li>{/each}</ul>
      </div>
      <div class="where">
        <h5><span use:fit={72}>Maps</span></h5>
        <svg class="bay" viewBox="0 0 300 300">
          <rect width="300" height="300" fill="#90daee" />
          <g transform="scale(.33333) translate(-114 -309)">
            {#each bay.land as p}<polygon points={p} fill="#f5f5f8" />{/each}
            {#each bay.sand as p}<polygon points={p} fill="#f4eee4" />{/each}
            {#each bay.green as p}<polygon points={p} fill="#bdeed2" />{/each}
            {#each bay.streets as g}<path d={grid(g)} class="lane" />{/each}
            {#each bay.roads as p}<path d={smooth(p)} class="route" />{/each}
          </g>
          {#each [[361, 426, '1'], [487, 797, '1'], [431, 1177, '1'], [635, 1134, '82']] as [x, y, n]}
            <rect x={bx(x) - 7.5} y={by(y) - 6} width="15" height="12" rx="6" fill="#fff" stroke="#777" />
            <text x={bx(x)} y={by(y) + 3.2} class="route-no">{n}</text>
          {/each}
          {@render interstate(bx(734), by(576), 14, '80')}
          {@render interstate(bx(483), by(989), 19, '280')}
          {#each bayLabels as [t, x1, x2, y, size, kind]}
            <text x={bx(x1)} y={by(y)} textLength={(x2 - x1) / 3} font-size={size} class="place {kind ?? ''}">{t}</text>
          {/each}
          <rect x="186" y="286" width="114" height="14" fill="#f5f5f5" opacity=".72" />
          <text x="187.5" y="297" textLength="110.5" font-size="11.5" class="credit">Map data ©2024 Google</text>
          <g transform="translate(6 294)" class="google">
            {#each google as [c, x, color]}<text {x} fill={color}>{c}</text>{/each}
          </g>
        </svg>
      </div>
    </div>
    <div class="rule"></div>
    <div class="social">
      <svg viewBox="0 0 30 30"><circle cx="15" cy="15" r="15" fill="#fdf9f4" /><g fill="none" stroke="#55ad79" stroke-width="1.6"><rect x="6.800" y="6.800" width="16.400" height="16.400" rx="4.500" /><circle cx="15" cy="15" r="4" /></g><circle cx="19.6" cy="10.4" r="1.1" fill="#55ad79" /></svg>
      <svg viewBox="0 0 30 30"><circle cx="15" cy="15" r="15" fill="#fdf9f4" /><path transform="translate(6 6) scale(1.125)" fill="#349a75" d="M16 8.049c0-4.446-3.582-8.050-8-8.050C3.580 0-.002 3.603-.002 8.050c0 4.017 2.926 7.347 6.750 7.951v-5.625h-2.030V8.050H6.750V6.275c0-2.017 1.195-3.131 3.022-3.131.876 0 1.791.157 1.791.157v1.980h-1.009c-.993 0-1.303.621-1.303 1.258v1.510h2.218l-.354 2.326H9.250V16c3.824-.604 6.750-3.934 6.750-7.951" /></svg>
      <svg viewBox="0 0 30 30"><circle cx="15" cy="15" r="15" fill="#fdf9f4" /><rect x="6" y="8.600" width="18" height="13" rx="3.500" fill="#1f8f73" /><path d="M13.200 12v6l5-3z" fill="#fdf9f4" /></svg>
      <svg viewBox="0 0 30 30"><circle cx="15" cy="15" r="15" fill="#fdf9f4" /><path transform="translate(6 6) scale(1.125)" fill="#0b8371" d="M5.026 15c6.038 0 9.341-5.003 9.341-9.334q.002-.211-.006-.422A6.700 6.700 0 0 0 16 3.542a6.700 6.700 0 0 1-1.889.518 3.300 3.300 0 0 0 1.447-1.817 6.500 6.500 0 0 1-2.087.793A3.286 3.286 0 0 0 7.875 6.030a9.320 9.320 0 0 1-6.767-3.429 3.290 3.290 0 0 0 1.018 4.382A3.300 3.300 0 0 1 .640 6.575v.045a3.290 3.290 0 0 0 2.632 3.218 3.200 3.200 0 0 1-.865.115 3 3 0 0 1-.614-.057 3.280 3.280 0 0 0 3.067 2.277A6.600 6.600 0 0 1 .780 13.580a6 6 0 0 1-.780-.045A13.340 13.340 0 0 0 5.026 15" /></svg>
      <svg viewBox="0 0 30 30"><defs><linearGradient id="li"><stop offset="0" stop-color="#5fb57c" /><stop offset="1" stop-color="#007d70" /></linearGradient></defs><circle cx="15" cy="15" r="15" fill="#fdf9f4" /><path transform="translate(7.7 7.5) scale(.92)" fill="url(#li)" d="M0 1.146C0 .513.526 0 1.175 0h13.650C15.474 0 16 .513 16 1.146v13.708c0 .633-.526 1.146-1.175 1.146H1.175C.526 16 0 15.487 0 14.854zm4.943 12.248V6.169H2.542v7.225zm-1.200-8.212c.837 0 1.358-.554 1.358-1.248-.015-.709-.520-1.248-1.342-1.248S2.400 3.226 2.400 3.934c0 .694.521 1.248 1.327 1.248zm4.908 8.212V9.359c0-.216.016-.432.080-.586.173-.431.568-.878 1.232-.878.869 0 1.216.662 1.216 1.634v3.865h2.401V9.250c0-2.220-1.184-3.252-2.764-3.252-1.274 0-1.845.700-2.165 1.193v.025h-.016l.016-.025V6.169h-2.400c.030.678 0 7.225 0 7.225z" /></svg>
    </div>
  </footer>
</div>

<style>
  :global(body) { background: #fdf9f4; }
  .page { width: 1920px; height: 3544px; display: flex; flex-direction: column; background: #fdf9f4; color: #000; font: 400 18.5px/27px Inter, sans-serif; }
  .page span { display: inline-block; white-space: nowrap; }
  .page p, nav, .input, .columns ul { font-feature-settings: "cv11"; }
  h1, h2, h3, h4, h5, p, ul { margin: 0; padding: 0; list-style: none; }
  a { color: inherit; text-decoration: none; }

  .hero, footer { background: linear-gradient(90deg, #60b57d, #007e70 98%); color: #fff; }
  .hero { position: relative; height: 700px; }
  .swoosh { position: absolute; inset: 0; width: 1920px; height: 700px; }
  header { position: relative; display: flex; align-items: center; height: 60px; padding: 80px 162px 0; }
  .brand { display: flex; align-items: center; gap: 14px; width: 453.5px; }
  .brand strong { font: 600 28px/38px Inter, sans-serif; padding-top: 2px; }
  .mark { width: 50px; height: 50px; }
  .big .mark { width: 80px; height: 80px; }
  nav { display: flex; gap: 50px; padding-top: 3px; }
  nav .active { font-weight: 600; }
  .button { display: flex; align-items: center; justify-content: center; width: 221px; height: 60px; margin-left: auto; border-radius: 30px; background: #ec754b; color: #fff; font: 600 22px/30px Inter, sans-serif; }
  .intro { position: relative; box-sizing: border-box; height: 328px; margin: 86px 162px 0; padding: 53px 0 0 84px; border-left: 5px solid #fff; }
  h1 { font: 700 70px/96px Inter, sans-serif; }
  .intro p { margin-top: 46px; }

  .contact { display: flex; justify-content: space-between; padding: 202px 162px 0; }
  h2 { font: 600 54px/73.5px Inter, sans-serif; }
  .about p { margin-top: 49px; }
  .about ul { display: flex; flex-direction: column; gap: 30.5px; margin-top: 50px; }
  .about li { display: flex; align-items: center; gap: 20px; color: #141414; font: 600 28px/48px Inter, sans-serif; }
  .glyph { width: 48px; height: 48px; }
  form { display: grid; grid-template-columns: 402px 402px; gap: 52px 56px; }
  h3 { font: 600 34px/46px Inter, sans-serif; }
  .full { grid-column: 1 / 3; }
  .input { box-sizing: border-box; height: 65px; margin-top: 30px; padding: 19px 24px 0; border: 1px solid #000; border-radius: 30px; }
  .area { height: 250px; }
  .send { width: 256px; margin: -2px 0 0; }

  .maps { display: flex; flex-direction: column; align-items: center; margin: 200px 102px 0 222px; text-align: center; }
  h4 { font: 600 22px/30px Inter, sans-serif; }
  .maps h2 { margin-top: 21px; line-height: 74px; }
  .map { width: 1596px; height: 544px; margin-top: 79px; border-radius: 20px; overflow: hidden; }
  .map polyline, .minor path, .bay path { vector-effect: non-scaling-stroke; }
  .map polyline { fill: none; stroke-linejoin: round; }
  .tint { fill: #e3e7ea; }
  .pink { fill: #f9ebec; }
  .park { fill: #c3ecb2; }
  .meadow { fill: #d5f0ca; }
  .shops { fill: #fdf2dd; }
  .water { fill: #aadaff; }
  .map .stream { stroke: #aadaff; stroke-width: 1.8; }
  .map .rail { stroke: #d2d6d9; stroke-width: 1.6; }
  .minor { stroke: #fff; stroke-width: 1.9; fill: none; }
  .major { stroke: #fff; stroke-width: 5.5; fill: none; }
  .major .wide { stroke-width: 9; }
  .major .seam { stroke: #f7d16b; stroke-width: 1.2; }
  .casing { stroke: #f8d36e; }
  .casing .arterial { stroke-width: 10; }
  .casing .freeway { stroke-width: 14; }
  .fill .arterial { stroke: #ffeeaa; stroke-width: 6.5; }
  .fill .freeway { stroke: #ffe699; stroke-width: 9.5; }
  .map text, .bay text { font-family: Roboto, sans-serif; }
  .map > text { paint-order: stroke; stroke: rgba(255, 255, 255, .8); stroke-width: 3.5px; stroke-linejoin: round; }
  .map .st { fill: #6b7b82; font-weight: 500; }
  .map .hood { fill: #8596b0; font-weight: 700; }
  .map .green { fill: #1d831f; }
  .map .brown { fill: #74330d; stroke: #fff3c4; }
  .map .city { fill: #474f57; font-weight: 500; }
  .map .town { fill: #474f57; }
  .map .river { fill: #5583c6; stroke: none; }
  .map .nine { fill: #333; text-anchor: middle; stroke: none; font-weight: 500; }
  .num { fill: #fff; font-weight: 700; text-anchor: middle; }

  footer { flex: none; height: 598px; margin-top: 200px; padding: 0 162px; box-sizing: border-box; }
  .columns { display: flex; height: 278px; padding-top: 86px; }
  .identity { width: 443px; margin-top: -1px; }
  .identity p { margin-top: 30px; }
  .services { width: 299px; }
  .reach { width: 417px; }
  .links { width: 197px; }
  h5 { font: 600 28px/38px Inter, sans-serif; }
  .columns ul { display: flex; flex-direction: column; gap: 15px; margin-top: 29px; }
  .reach li { display: flex; align-items: center; gap: 19px; height: 34px; }
  .columns .reach ul { gap: 18px; margin-top: 28px; }
  .reach .glyph { width: 34px; height: 34px; stroke-width: 1.2; }
  .where { position: relative; z-index: 1; width: 300px; margin-right: -60px; }
  .where h5 { padding-left: 51px; }
  .bay { display: block; width: 300px; height: 300px; margin-top: 13px; }
  .lane { stroke: #d3dae6; stroke-width: .8; fill: none; }
  .route { stroke: #8d9cc4; stroke-width: 2; fill: none; }
  .bay .place { fill: #3c4043; paint-order: stroke; stroke: rgba(255, 255, 255, .8); stroke-width: 1.5px; }
  .bay .m { fill: #2c2f33; font-weight: 500; }
  .bay .g { fill: #2b8f62; }
  .route-no { fill: #444; font-size: 8.5px; text-anchor: middle; }
  .bay .credit { fill: #444; }
  .bay .google text { font: 500 18px "Open Sans", sans-serif; paint-order: stroke; stroke: #fff; stroke-width: 1.2px; }
  .rule { height: 4px; background: #fff; opacity: .9; }
  .social { display: flex; justify-content: center; gap: 10.2px; margin-top: 58px; }
  .social svg { width: 30px; height: 30px; }
</style>
